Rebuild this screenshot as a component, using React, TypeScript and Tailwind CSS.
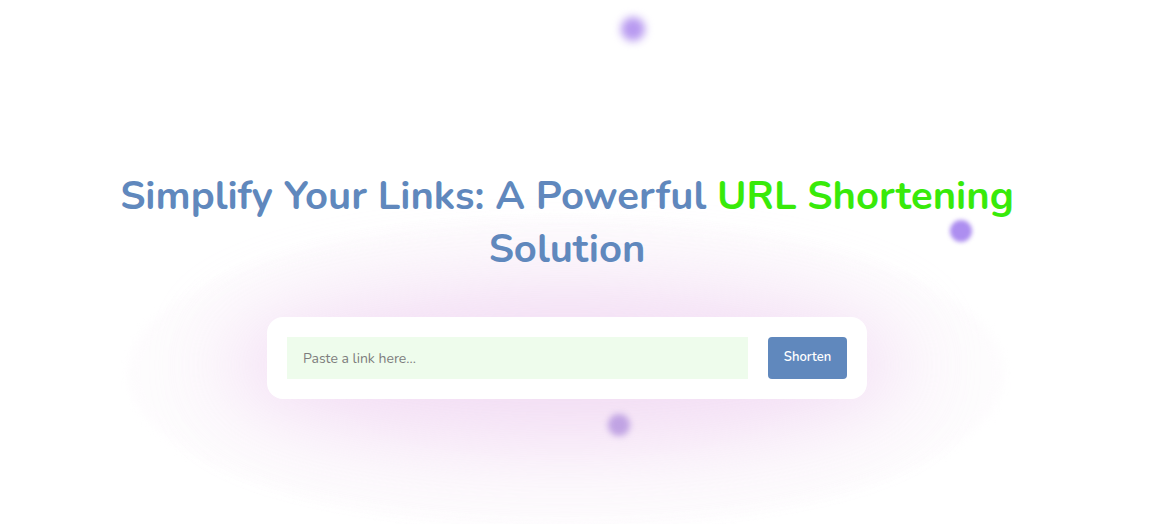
export default function App() {
  return (
    <div className="relative h-[524px] w-[1150px] overflow-hidden bg-white font-['Nunito','Lato','Noto_Sans',sans-serif]">
      {/* faint outer halo */}
      <div className="pointer-events-none absolute left-[128px] top-[218px] h-[310px] w-[876px] rounded-[50%] bg-[radial-gradient(ellipse_at_center,#fcf9fc_0%,#fdfbfd_60%,#fefdfe_88%,#ffffff_100%)] blur-[5px]" />
      {/* pink glow behind the form */}
      <div className="pointer-events-none absolute left-[225px] top-[285px] h-[160px] w-[680px] rounded-[50%] bg-[#f0d6f2] opacity-80 blur-[40px]" />

      {/* floating dots */}
      <div className="pointer-events-none absolute left-[621px] top-[17px] h-6 w-6 rounded-full bg-[#b89af0] blur-[4px]" />
      <div className="pointer-events-none absolute left-[950px] top-[220px] h-[22px] w-[22px] rounded-full bg-[#ad8ef0] blur-[2px]" />
      <div className="pointer-events-none absolute left-[608px] top-[414px] h-[22px] w-[22px] rounded-full bg-[#c0a3e3] blur-[3px]" />

      <div className="relative flex w-[1134px] flex-col items-center pt-[170px]">
        <h1 className="text-center text-[40px] font-bold leading-[53px] text-[#6088bd]">
          Simplify Your Links: A Powerful <span className="text-[#38ea0a]">URL Shortening</span>
          <br />
          Solution
        </h1>

        <div className="mt-[41px] flex w-[600px] items-center gap-5 rounded-2xl bg-white p-5">
          <input
            type="text"
            placeholder="Paste a link here..."
            className="h-[42px] flex-1 bg-[#eefcec] px-4 text-sm text-gray-700 outline-none placeholder:text-[#7d7d7d]"
          />
          <button className="h-[42px] w-[79px] rounded bg-[#6088bd] text-[13px] font-semibold text-white">
            Shorten
          </button>
        </div>
      </div>
    </div>
  );
}
